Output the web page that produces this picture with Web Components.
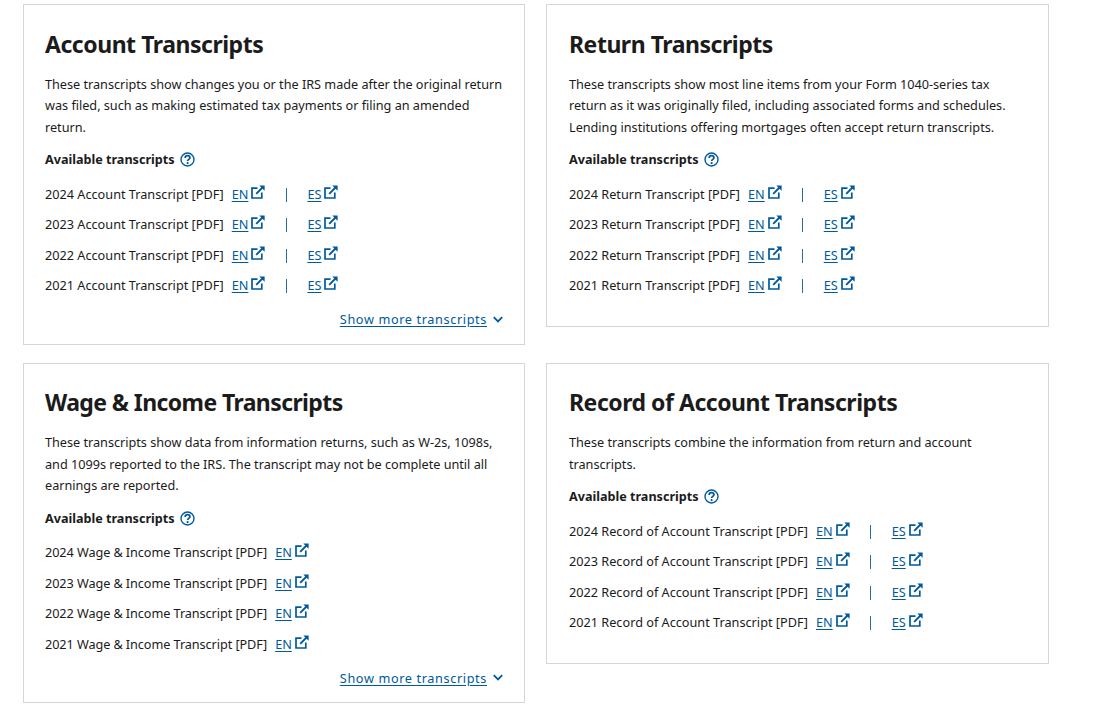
<!DOCTYPE html>
<html lang="en">
<head>
<meta charset="utf-8">
<title>Transcripts</title>
<style>
  html, body { margin: 0; background: #fff; }
  body { font-family: "Noto Sans", "Open Sans", sans-serif; color: #1b1b1b; }
</style>
</head>
<body>
<transcript-grid>
  <transcript-card heading="Account Transcripts" kind="Account" langs="EN,ES" more>
    These transcripts show changes you or the IRS made after the original return was filed, such as making estimated tax payments or filing an amended return.
  </transcript-card>
  <transcript-card heading="Return Transcripts" kind="Return" langs="EN,ES">
    These transcripts show most line items from your Form 1040-series tax return as it was originally filed, including associated forms and schedules. Lending institutions offering mortgages often accept return transcripts.
  </transcript-card>
  <transcript-card heading="Wage &amp; Income Transcripts" kind="Wage &amp; Income" langs="EN" more style="--heading-spacing: -.6px; --label-spacing: -.08px">
    These transcripts show data from information returns, such as W-2s, 1098s, and 1099s reported to the IRS. The transcript may not be complete until all earnings are reported.
  </transcript-card>
  <transcript-card heading="Record of Account Transcripts" kind="Record of Account" langs="EN,ES">
    These transcripts combine the information from return and account transcripts.
  </transcript-card>
</transcript-grid>

<script>
class TranscriptGrid extends HTMLElement {
  constructor() {
    super();
    this.attachShadow({ mode: 'open' });
    this.shadowRoot.innerHTML = `
      <style>
        :host {
          display: grid;
          grid-template-columns: 502px 503px;
          column-gap: 21px;
          row-gap: 17.9px;
          align-items: start;
          padding: 4px 0 0 23px;
        }
      </style>
      <slot></slot>
    `;
  }
}

class ExtLink extends HTMLElement {
  constructor() {
    super();
    this.attachShadow({ mode: 'open' });
    this.shadowRoot.innerHTML = `
      <style>
        :host { display: inline-flex; align-items: flex-start; color: #00599c; }
        a { color: inherit; text-decoration: underline; text-underline-offset: 2px; }
        svg { width: 14px; height: 14px; margin: 0 0 0 3px; flex: none; }
      </style>
      <a href="#"><slot></slot></a>
      <svg viewBox="0 0 14 14" fill="none" stroke="currentColor" aria-hidden="true">
        <path d="M6.5 3.2H1V13H10.8V7.5" stroke-width="1.7"/>
        <path d="M5.2 8.8L11.5 2.5" stroke-width="1.9"/>
        <path d="M8.3 .4H13.6V5.7Z" fill="currentColor" stroke="none"/>
      </svg>
    `;
  }
}

class TranscriptRow extends HTMLElement {
  constructor() {
    super();
    this.attachShadow({ mode: 'open' });
  }

  connectedCallback() {
    const langs = (this.getAttribute('langs') || 'EN').split(',');
    const links = langs.map(l => `<ext-link>${l}</ext-link>`).join('<span class="sep"></span>');
    this.shadowRoot.innerHTML = `
      <style>
        :host {
          display: flex;
          align-items: center;
          height: 30.4px;
          font-size: 12.7px;
          white-space: nowrap;
        }
        .label { margin-right: 8px; letter-spacing: var(--label-spacing, 0); }
        .sep {
          width: 1px;
          height: 14px;
          margin: 2px 20.4px 0 20.6px;
          background: #1f6fae;
        }
      </style>
      <span class="label">${this.getAttribute('label').replace('&', '&amp;')}</span>
      ${links}
    `;
  }
}

class TranscriptCard extends HTMLElement {
  constructor() {
    super();
    this.attachShadow({ mode: 'open' });
  }

  connectedCallback() {
    const kind = this.getAttribute('kind').replace('&', '&amp;');
    const langs = this.getAttribute('langs');
    const rows = [2024, 2023, 2022, 2021].map(year =>
      `<transcript-row label="${year} ${kind} Transcript [PDF]" langs="${langs}"></transcript-row>`
    ).join('');
    const more = this.hasAttribute('more') ? `
      <div class="more">
        <a href="#">Show more transcripts</a>
        <svg viewBox="0 0 10 7" width="10" height="7" fill="none" stroke="#00599c" stroke-width="1.8" aria-hidden="true"><path d="M.8 1.2L5 5.4L9.2 1.2"/></svg>
      </div>` : '';
    this.shadowRoot.innerHTML = `
      <style>
        :host {
          display: block;
          box-sizing: border-box;
          border: 1px solid #d6d6d6;
          padding: 23px 15px 14.6px 21px;
          background: #fff;
        }
        :host(:nth-child(even)) { padding-left: 22px; padding-right: 21px; }
        :host(:not([more])) { padding-bottom: 25.2px; }
        h2 {
          margin: 0 0 13.6px;
          font-size: 23px;
          letter-spacing: var(--heading-spacing, -.47px);
          line-height: 32px;
          font-weight: 700;
          color: #1b1b1b;
        }
        :host(:nth-child(n+3)) h2 { line-height: 31.6px; margin-bottom: 14px; }
        p {
          margin: 0 0 10.4px;
          font-size: 12.7px;
          line-height: 21.5px;
          letter-spacing: -.02px;
        }
        .avail {
          display: flex;
          align-items: center;
          gap: 5px;
          height: 22px;
          margin-bottom: 8.3px;
          font-size: 12.6px;
          font-weight: 700;
        }
        .avail svg { width: 15px; height: 15px; }
        .more {
          display: flex;
          justify-content: flex-end;
          align-items: center;
          gap: 6px;
          margin: 8.7px 6px 0 0;
          height: 20px;
          font-size: 12.7px;
          letter-spacing: .62px;
        }
        .more a { color: #00599c; text-underline-offset: 2px; }
      </style>
      <h2>${this.getAttribute('heading').replace('&', '&amp;')}</h2>
      <p><slot></slot></p>
      <div class="avail">
        <span>Available transcripts</span>
        <svg viewBox="0 0 15 15" aria-hidden="true">
          <circle cx="7.5" cy="7.5" r="6.5" fill="none" stroke="#00599c" stroke-width="1.4"/>
          <path d="M5.2 5.9C5.2 4.5 6.2 3.6 7.5 3.6C8.9 3.6 9.9 4.5 9.9 5.7C9.9 7.4 7.6 7.4 7.6 9.1" fill="none" stroke="#00599c" stroke-width="1.8"/>
          <circle cx="7.6" cy="11.1" r="1.1" fill="#00599c"/>
        </svg>
      </div>
      <div class="rows">${rows}</div>
      ${more}
    `;
  }
}

customElements.define('transcript-grid', TranscriptGrid);
customElements.define('ext-link', ExtLink);
customElements.define('transcript-row', TranscriptRow);
customElements.define('transcript-card', TranscriptCard);
</script>
</body>
</html>
